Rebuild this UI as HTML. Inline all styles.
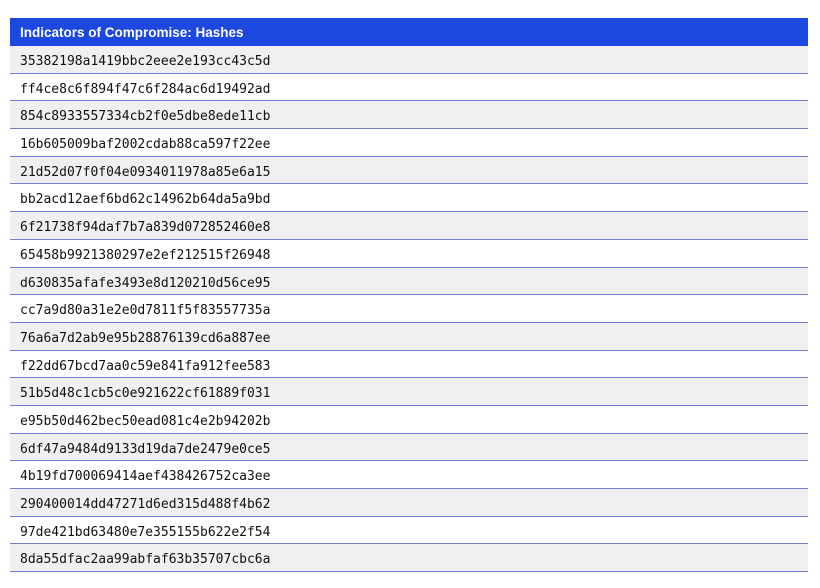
<!DOCTYPE html>
<html><head><style>
body{margin:0;background:#fff;width:820px;height:588px;overflow:hidden}
.t{position:absolute;left:10px;top:18px;width:798px}
.h{height:28px;background:#1c48e0;color:#fff;font:bold 13.5px "Liberation Sans",sans-serif;line-height:29px;padding-left:10px}
.r{height:24.7px;padding-top:2px;border-bottom:1px solid #6f7fd6;font:13px "DejaVu Sans Mono",monospace;line-height:28px;padding-left:10px;color:#111;overflow:visible}
.r:nth-child(even){background:#f0f0f0}
</style></head><body><div class="t">
<div class="h">Indicators of Compromise: Hashes</div>
<div class="r">35382198a1419bbc2eee2e193cc43c5d</div>
<div class="r">ff4ce8c6f894f47c6f284ac6d19492ad</div>
<div class="r">854c8933557334cb2f0e5dbe8ede11cb</div>
<div class="r">16b605009baf2002cdab88ca597f22ee</div>
<div class="r">21d52d07f0f04e0934011978a85e6a15</div>
<div class="r">bb2acd12aef6bd62c14962b64da5a9bd</div>
<div class="r">6f21738f94daf7b7a839d072852460e8</div>
<div class="r">65458b9921380297e2ef212515f26948</div>
<div class="r">d630835afafe3493e8d120210d56ce95</div>
<div class="r">cc7a9d80a31e2e0d7811f5f83557735a</div>
<div class="r">76a6a7d2ab9e95b28876139cd6a887ee</div>
<div class="r">f22dd67bcd7aa0c59e841fa912fee583</div>
<div class="r">51b5d48c1cb5c0e921622cf61889f031</div>
<div class="r">e95b50d462bec50ead081c4e2b94202b</div>
<div class="r">6df47a9484d9133d19da7de2479e0ce5</div>
<div class="r">4b19fd700069414aef438426752ca3ee</div>
<div class="r">290400014dd47271d6ed315d488f4b62</div>
<div class="r">97de421bd63480e7e355155b622e2f54</div>
<div class="r">8da55dfac2aa99abfaf63b35707cbc6a</div>
</div></body></html>
